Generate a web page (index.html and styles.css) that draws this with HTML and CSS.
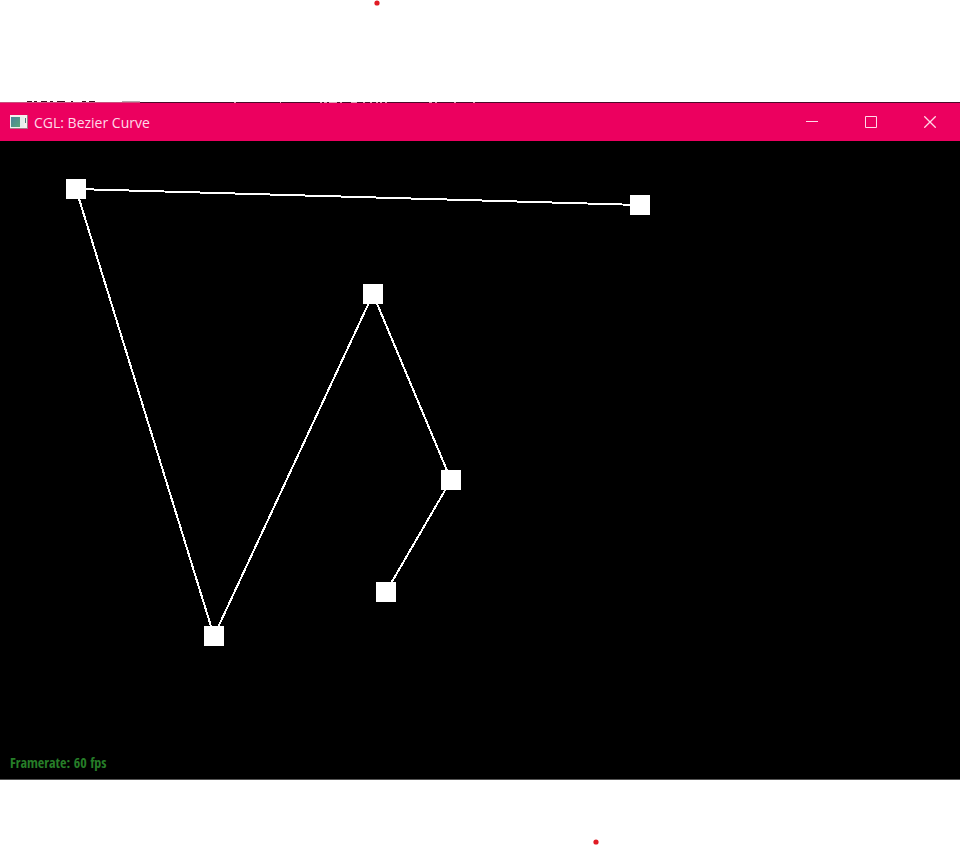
FILE: index.html
```html
<!DOCTYPE html>
<html lang="en">
<head>
<meta charset="utf-8">
<title>CGL: Bezier Curve</title>
<link rel="stylesheet" href="styles.css">
</head>
<body>
<div class="margin margin-top">
  <svg class="dot dot-top" width="6" height="6" aria-hidden="true"><circle cx="3" cy="3" r="2.600"/></svg>
  <svg class="scraps" width="480" height="2" aria-hidden="true">
    <path class="scrap-gray" d="M122 0h18v1h-18z"/>
    <path class="scrap-dark" d="M27 0h5v1h-5zM34 0h3v1h-3zM41 0h6v1h-6zM50 0h3v1h-3zM57 0h8v1h-8zM71 0h2v1h-2zM82 0h4v1h-4zM89 0h6v1h-6z"/>
    <path class="scrap-rose" d="M0 1h140v1H0z"/>
    <path class="scrap-pink" d="M320 1h2v1h-2zM324 1h3v1h-3zM329 1h8v1h-8zM340 1h2v1h-2zM351 1h6v1h-6zM363 1h2v1h-2zM370 1h2v1h-2zM376 1h2v1h-2zM380 1h2v1h-2zM385 1h2v1h-2zM429 1h3v1h-3zM435 1h2v1h-2zM454 1h2v1h-2zM473 1h2v1h-2zM234 1h2v1h-2zM280 1h1v1h-1z"/>
  </svg>
</div>
<main class="window">
  <header class="titlebar">
    <svg class="app-icon" width="18" height="16" viewBox="0 0 18 16" aria-hidden="true">
      <defs><linearGradient id="pane" x2="1" y2="1"><stop offset="0" stop-color="#4b829b"/><stop offset="1" stop-color="#58a77a"/></linearGradient></defs>
      <path fill="#a47c86" d="M0 1h18v14H0z"/>
      <path fill="#f4f0ee" d="M0 1h17v13H0z"/>
      <path fill="url(#pane)" d="M1 3h9v10H1z"/>
      <path fill="#e6efec" d="M10 3h4v10h-4z"/>
      <path fill="#447f7b" d="M15 4h1v5h-1z"/>
    </svg>
    <h1 class="title">CGL: Bezier Curve</h1>
    <div class="controls">
      <button class="control" type="button" aria-label="Minimize"><svg width="12" height="12"><path d="M0 5.500h12"/></svg></button>
      <button class="control" type="button" aria-label="Maximize"><svg width="12" height="12"><path d="M.5.5h11v11H.5z"/></svg></button>
      <button class="control" type="button" aria-label="Close"><svg width="12" height="12"><path class="cross" d="M.3.3l11.400 11.400M11.700.3L.3 11.700"/></svg></button>
    </div>
  </header>
  <section class="viewport">
    <svg class="scene" role="img" aria-label="Control polygon">
      <polyline class="edges" points="640,64 76,48 214,495 373,153 451,339 386,451"/>
      <g class="nodes">
        <rect x="66" y="38" width="20" height="20"/>
        <rect x="630" y="54" width="20" height="20"/>
        <rect x="363" y="143" width="20" height="20"/>
        <rect x="441" y="329" width="20" height="20"/>
        <rect x="376" y="441" width="20" height="20"/>
        <rect x="204" y="485" width="20" height="20"/>
      </g>
    </svg>
    <p class="framerate">Framerate: 60 fps</p>
  </section>
</main>
<div class="margin margin-bottom">
  <svg class="dot dot-bottom" width="6" height="6" aria-hidden="true"><circle cx="3" cy="3" r="2.600"/></svg>
</div>
</body>
</html>
```
FILE: styles.css
```css
* {
  box-sizing: border-box;
}

body {
  margin: 0;
  min-height: 100vh;
  display: flex;
  flex-direction: column;
  background: #fff;
  font-family: "Open Sans", "Noto Sans", sans-serif;
}

.margin {
  position: relative;
}

.margin-top {
  height: 102px;
}

.margin-bottom {
  height: 65px;
}

.dot {
  position: absolute;
  fill: #e01b24;
}

.dot-top {
  top: 0;
  left: 374px;
}

.dot-bottom {
  bottom: 0;
  left: 593px;
}

.scraps {
  position: absolute;
  left: 0;
  bottom: -1px;
  z-index: 1;
  shape-rendering: crispEdges;
}

.scrap-dark {
  fill: #3b1020;
}

.scrap-gray {
  fill: #b8a8ae;
}

.scrap-rose {
  fill: #c8507c;
}

.scrap-pink {
  fill: #e0a0b4;
}

.window {
  flex: 1;
  display: flex;
  flex-direction: column;
}

.titlebar {
  height: 39px;
  display: flex;
  align-items: center;
  gap: 6px;
  padding-left: 10px;
  border-top: 1px solid #4a0a28;
  background: #ec005f;
}

.title {
  flex: 1;
  margin: 0;
  padding-top: 2px;
  color: #ffd9e8;
  font: 400 14px/20px "Open Sans", sans-serif;
}

.controls {
  display: flex;
  align-self: stretch;
  padding-right: 1px;
}

.control {
  width: 59px;
  display: flex;
  align-items: center;
  justify-content: center;
  padding: 0;
  border: 0;
  background: none;
}

.control path {
  fill: none;
  stroke: #ffd9e8;
}

.control .cross {
  stroke-width: 1.3;
}

.viewport {
  position: relative;
  flex: 1;
  display: flex;
  flex-direction: column;
  justify-content: flex-end;
  padding: 6px 10px;
  background: #000;
  border-bottom: 1px solid #555;
}

.scene {
  position: absolute;
  top: 0;
  left: 0;
  width: 100%;
  height: 100%;
  shape-rendering: crispEdges;
}

.edges {
  fill: none;
  stroke: #fff;
  stroke-width: 2;
}

.nodes {
  fill: #fff;
}

.framerate {
  margin: 0;
  color: #267d28;
  font: 700 14px/20px "Open Sans Condensed", "Liberation Sans Narrow", sans-serif;
}
```
